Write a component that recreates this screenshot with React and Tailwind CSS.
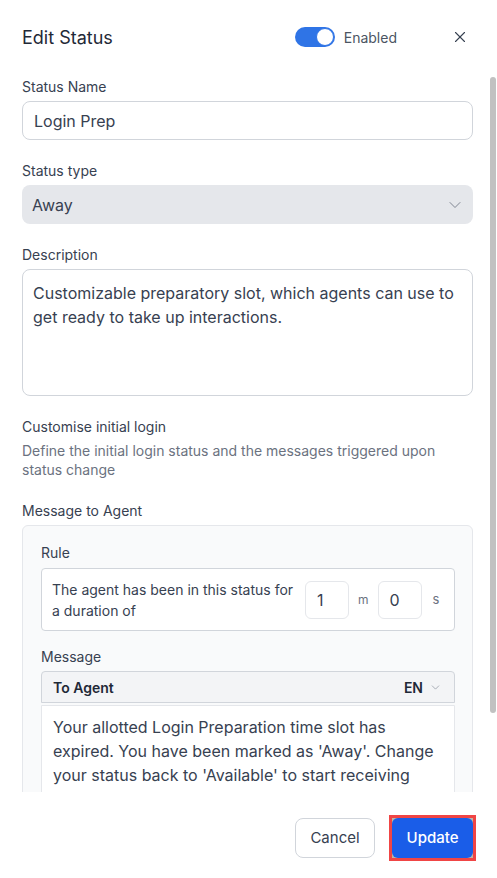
import { X, ChevronDown } from 'lucide-react'

export default function App() {
  return (
    <div className="w-[497px] h-[878px] bg-white relative overflow-hidden font-['Inter',sans-serif] text-[#374151]">
      {/* header */}
      <div className="h-[74px] flex items-center pl-[22px] pr-[28px]">
        <h2 className="flex-1 text-[18px] text-[#1f2937]">Edit Status</h2>
        <div className="flex items-center gap-[9px]">
          <div className="w-[40px] h-[20px] rounded-full bg-[#2f74e6] flex items-center justify-end pr-[1px]">
            <div className="w-[18px] h-[18px] rounded-full bg-white border border-[#2f74e6]" />
          </div>
          <span className="text-[14px] text-[#4b5563]">Enabled</span>
        </div>
        <button className="ml-[54px] text-[#374151]">
          <X size={18} strokeWidth={1.5} />
        </button>
      </div>

      {/* scroll body */}
      <div className="h-[718px] overflow-hidden pl-[22px] pr-[24px] pt-[3px]">
        <label className="block text-[14px] leading-[20px]">Status Name</label>
        <div className="mt-[4px] h-[39px] rounded-lg border border-[#d1d5db] flex items-center px-[11px] text-[16px] text-[#374151]">
          Login Prep
        </div>

        <label className="block mt-[21px] text-[14px] leading-[20px]">Status type</label>
        <div className="mt-[4px] h-[39px] rounded-lg bg-[#e5e7eb] flex items-center justify-between pl-[10px] pr-[8px] text-[16px]">
          <span>Away</span>
          <ChevronDown size={20} strokeWidth={1} className="text-[#6b7280]" />
        </div>

        <label className="block mt-[21px] text-[14px] leading-[20px]">Description</label>
        <div className="mt-[4px] h-[127px] rounded-lg border border-[#d1d5db] px-[10px] pt-[11px] text-[16px] leading-[24px]">
          Customizable preparatory slot, which agents can use to get ready to take up interactions.
        </div>

        <div className="mt-[21px] text-[14px] leading-[20px]">Customise initial login</div>
        <div className="mt-[4px] text-[14px] leading-[19px] text-[#6b7280] pr-[20px]">
          Define the initial login status and the messages triggered upon status change
        </div>

        <div className="mt-[22px] text-[14px] leading-[20px]">Message to Agent</div>
        <div className="mt-[4px] rounded-md border border-[#e5e7eb] bg-[#f9fafb] pl-[18px] pr-[17px] pt-[17px] pb-[20px]">
          <div className="text-[14px] leading-[20px]">Rule</div>
          <div className="mt-[5px] h-[63px] rounded border border-[#d1d5db] bg-white flex items-center pl-[10px]">
            <div className="w-[253px] shrink-0 pr-[8px] text-[14px] leading-[21px]">
              The agent has been in this status for a duration of
            </div>
            <div className="w-[44px] h-[38px] shrink-0 rounded-md border border-[#e5e7eb] flex items-center pl-[11px] text-[16px]">1</div>
            <span className="mx-[9px] text-[12px] text-[#6b7280]">m</span>
            <div className="w-[44px] h-[38px] shrink-0 rounded-md border border-[#e5e7eb] flex items-center pl-[11px] text-[16px]">0</div>
            <span className="ml-[11px] text-[13px] text-[#6b7280]">s</span>
          </div>

          <div className="mt-[16px] text-[14px] leading-[20px]">Message</div>
          <div className="mt-[4px] h-[32px] rounded-t border border-[#d1d5db] bg-[#f3f4f6] flex items-center justify-between pl-[11px] pr-[12px]">
            <span className="text-[14px] font-semibold text-[#1f2937]">To Agent</span>
            <span className="flex items-center gap-[6px] text-[14px] font-semibold text-[#1f2937]">
              EN
              <ChevronDown size={13} strokeWidth={1} className="text-[#6b7280]" />
            </span>
          </div>
          <div className="mt-[2px] rounded-b-md border border-[#e5e7eb] bg-white px-[11px] pt-[9px] pb-[12px] text-[16px] leading-[24px]">
            Your allotted Login Preparation time slot has expired. You have been marked as 'Away'. Change your status back to 'Available' to start receiving interactions again.
          </div>
        </div>
      </div>

      {/* scrollbar thumb */}
      <div className="absolute left-[490px] top-[77px] w-[6px] h-[636px] rounded-full bg-[#c1c1c1]" />

      {/* footer */}
      <div className="h-[86px] flex items-center justify-end gap-[14px] pr-[21px] pt-[6px]">
        <button className="w-[80px] h-[40px] rounded-lg border border-[#d1d5db] text-[15px] text-[#374151]">
          Cancel
        </button>
        <span className="border-[3px] border-[#f04545] bg-[#b9b4a8]">
          <span className="block w-[81px] h-[40px] rounded-md bg-[#1a5de8] text-white text-[15px] font-medium flex items-center justify-center">
            Update
          </span>
        </span>
      </div>
    </div>
  )
}
